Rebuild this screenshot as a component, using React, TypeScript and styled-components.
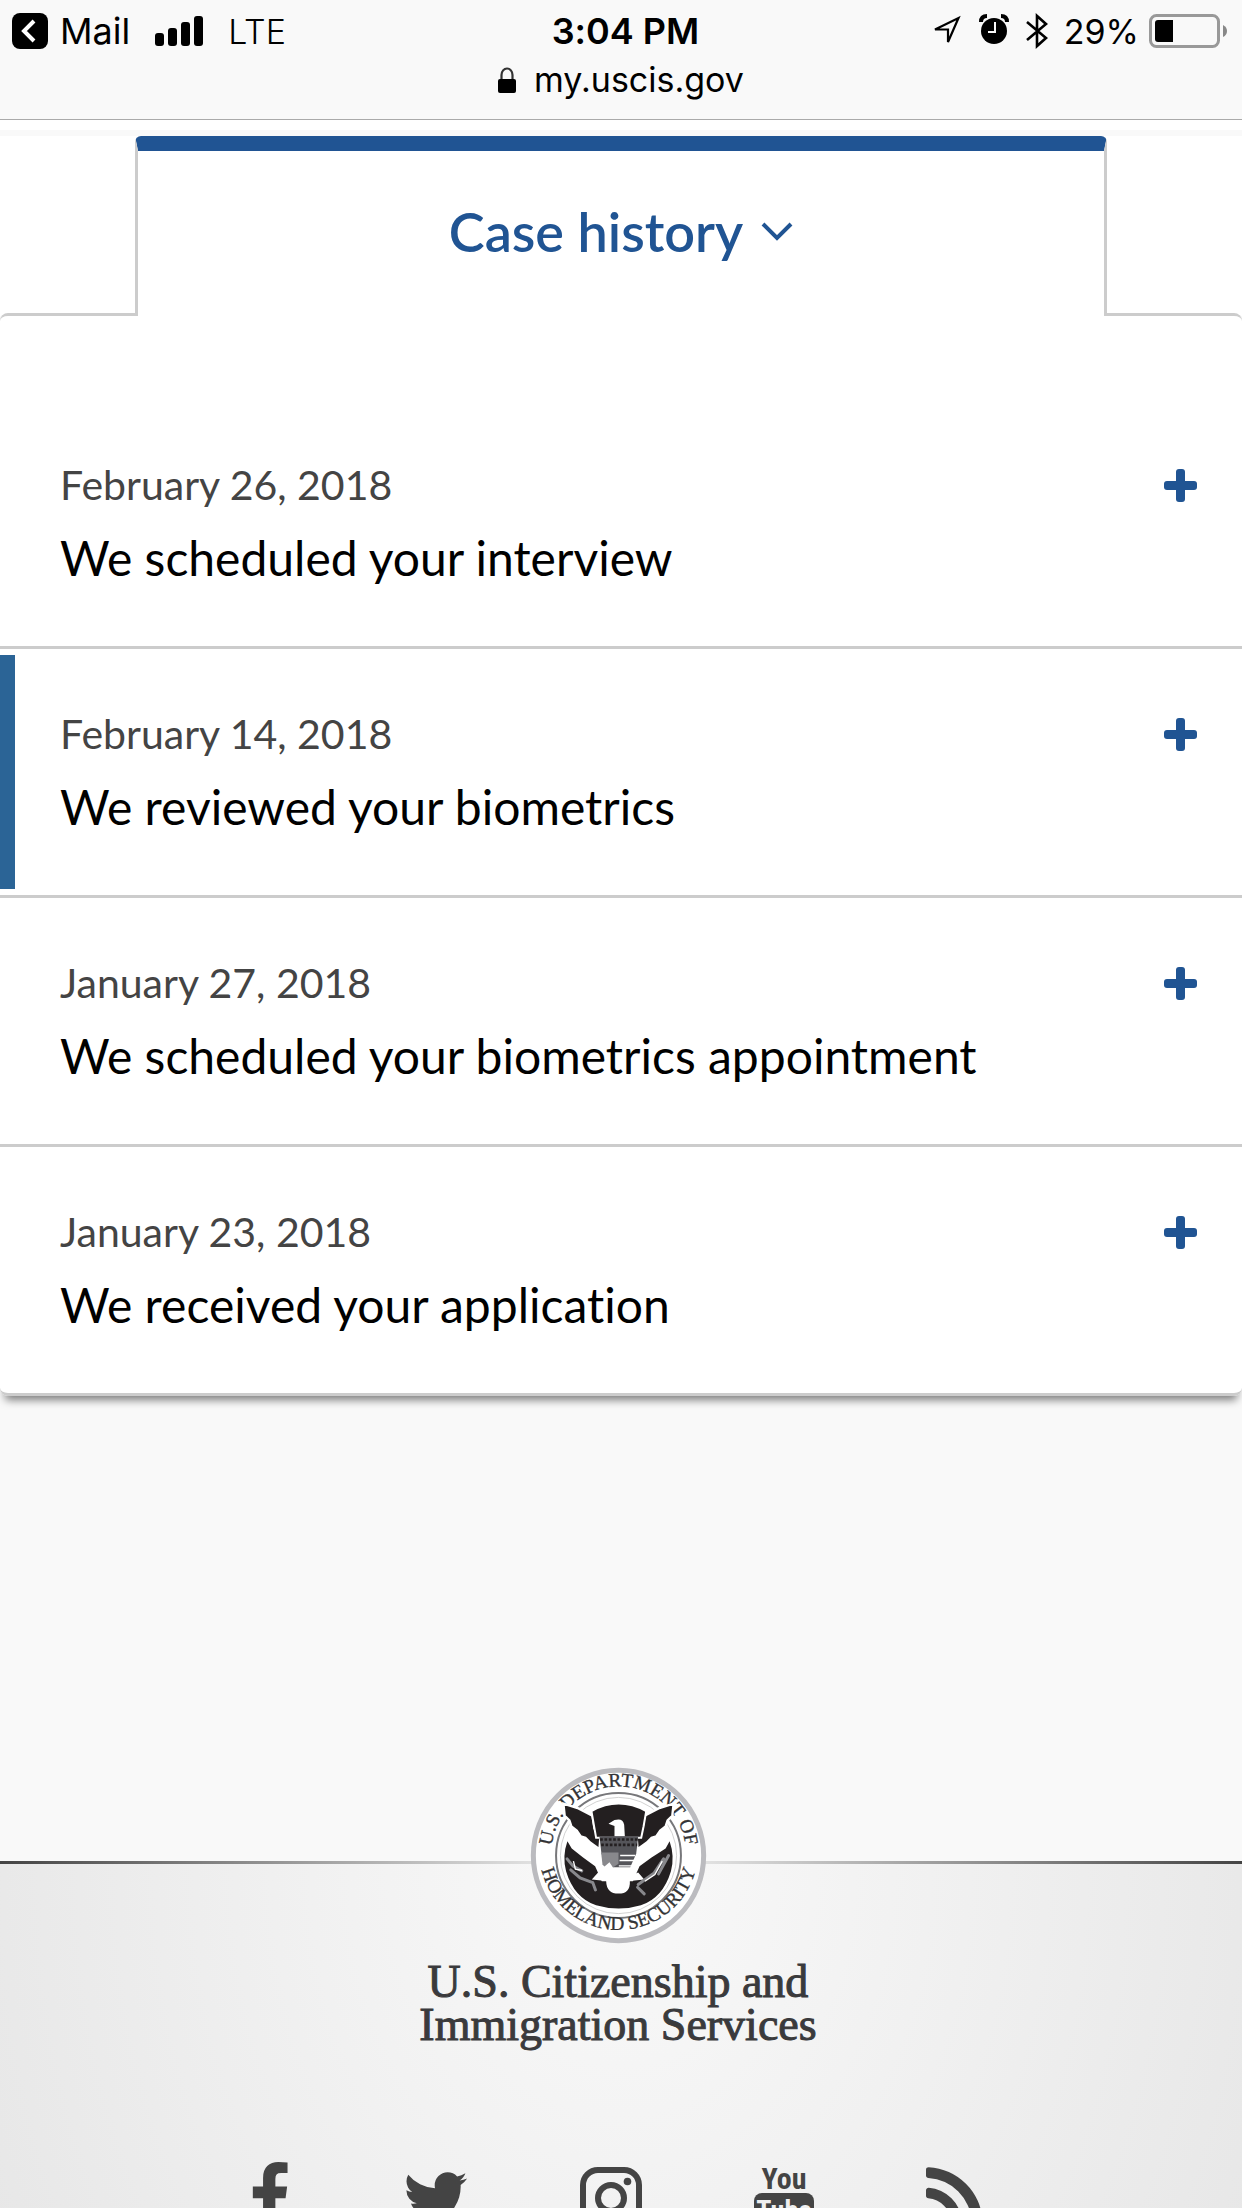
import React, { useState } from "react";
import styled, { createGlobalStyle } from "styled-components";

const blue = "#205493";
const ink = "#444444";
const line = "#cccccc";
const paper = "#f9f9f9";

const GlobalStyle = createGlobalStyle`
  *, *::before, *::after { box-sizing: border-box; }
  html, body, #root { height: 100%; }
  body {
    margin: 0;
    overflow: hidden;
    background: ${paper};
    color: #000;
    font-family: Lato, "Open Sans", sans-serif;
    font-variant-ligatures: none;
  }
  button { font: inherit; color: inherit; background: none; border: 0; padding: 0; text-align: left; cursor: pointer; }
  a { color: inherit; text-decoration: none; }
  svg { display: block; flex: none; }
`;

const Page = styled.div`
  min-height: 100%;
  display: flex;
  flex-direction: column;
`;

const BrowserBar = styled.header`
  flex: none;
  height: 120px;
  background: ${paper};
  border-bottom: 1px solid #aaa;
  font-family: Inter, "Liberation Sans", sans-serif;
  font-size: 34px;
`;

const StatusBar = styled.div`
  display: grid;
  grid-template-columns: 1fr auto 1fr;
  align-items: center;
  height: 62px;
  padding: 0 15px 0 12px;
`;

const StatusGroup = styled.div<{ $end?: boolean; $gap: number }>`
  display: flex;
  align-items: center;
  justify-content: ${(p) => (p.$end ? "flex-end" : "flex-start")};
  gap: ${(p) => p.$gap}px;
`;

const BackLink = styled.button`
  display: flex;
  align-items: center;
  gap: 12px;
  font-size: 36px;
`;

const Carrier = styled.span`
  font-weight: 300;
`;

const Clock = styled.time`
  padding-left: 12px;
  font-size: 36px;
  font-weight: 600;
`;

const BatteryGroup = styled.div`
  display: flex;
  align-items: center;
  gap: 10px;
`;

const Address = styled.div`
  display: flex;
  align-items: center;
  justify-content: center;
  gap: 18px;
  line-height: 36px;
`;

const History = styled.main`
  flex: none;
  margin-top: 10px;
  box-shadow: 0 -10px 0 #fff;
`;

const TabStrip = styled.div`
  border-top: 6px solid ${paper};
  background: #fff;
  padding: 0 135px;
`;

const Tab = styled.button`
  position: relative;
  z-index: 1;
  display: flex;
  align-items: center;
  justify-content: center;
  gap: 18px;
  width: 100%;
  height: 180px;
  margin-bottom: -3px;
  padding-bottom: 4px;
  background: #fff;
  border: 3px solid ${line};
  border-top: 15px solid ${blue};
  border-bottom: 0;
  border-radius: 6px 6px 0 0;
  color: ${blue};
  font-size: 54px;
  font-weight: 600;
`;

const Panel = styled.section`
  background: #fff;
  padding-top: 84px;
  border-top: 3px solid ${line};
  border-radius: 8px;
  box-shadow: 0 9px 9px -5px rgba(0, 0, 0, 0.5);
`;

const EventList = styled.ol`
  list-style: none;
  margin: 0;
  padding: 0;
`;

const EventItem = styled.li<{ $active?: boolean }>`
  border-bottom: 3px solid ${line};
  padding: 6px 0;
  &:last-child { border-radius: 0 0 8px 8px; }
  > button { border-left: 15px solid ${(p) => (p.$active ? "#2b6496" : "transparent")}; }
`;

const EventButton = styled.button`
  display: flex;
  align-items: flex-start;
  justify-content: space-between;
  width: 100%;
  padding: 42px 45px 46px 45px;
`;

const EventText = styled.span`
  display: flex;
  flex-direction: column;
  line-height: 73px;
`;

const EventDate = styled.time`
  color: ${ink};
  font-size: 41px;
`;

const EventTitle = styled.span`
  font-size: 48px;
`;

const PlusIcon = styled.svg`
  width: 33px;
  height: 33px;
  margin-top: 21px;
  fill: ${blue};
`;

const Footer = styled.footer`
  flex: 1 0 auto;
  display: flex;
  flex-direction: column;
  align-items: center;
  margin-top: 465px;
  padding-right: 6px;
  border-top: 3px solid;
  border-image: linear-gradient(90deg, #444 0%, #e4e4e4 44%, #e4e4e4 56%, #444 100%) 1;
  background: radial-gradient(ellipse 56% 900px at 50% 0, #f9f9f9 0%, #e7e7e7 100%);
`;

const Seal = styled.svg`
  width: 177px;
  height: 177px;
  margin-top: -97px;
`;

const Agency = styled.p`
  margin: 16px 0 0;
  color: #3a3a3c;
  font: 46px/43px "Liberation Serif", serif;
  -webkit-text-stroke: 1px #3a3a3c;
  text-align: center;
`;

const SocialLinks = styled.nav`
  display: flex;
  gap: 111px;
  margin-top: 116px;
  padding-right: 4px;
  height: 72px;
  color: ${ink};
  fill: currentColor;
`;

const events = [
  { date: "February 26, 2018", iso: "2018-02-26", title: "We scheduled your interview" },
  { date: "February 14, 2018", iso: "2018-02-14", title: "We reviewed your biometrics", active: true },
  { date: "January 27, 2018", iso: "2018-01-27", title: "We scheduled your biometrics appointment" },
  { date: "January 23, 2018", iso: "2018-01-23", title: "We received your application" },
];

function StatusIcons() {
  return (
    <StatusGroup $end $gap={16}>
      <svg width="117" height="36" viewBox="0 0 117 36" aria-hidden="true">
        <path d="M4 16.500L27.500 5L17 29V16.500Z" fill="none" stroke="#000" strokeWidth="2.200" />
        <circle cx="63" cy="18" r="13" />
        <path d="M50 9q0-6 6-6M76 9q0-6-6-6" fill="none" stroke="#000" strokeWidth="4" />
        <path d="M64 9v10h-7" fill="none" stroke={paper} strokeWidth="2" />
        <path d="M96 9l19 16-9 8V3l9 8-19 16" fill="none" stroke="#000" strokeWidth="2.600" />
      </svg>
      <BatteryGroup>
        <span>29%</span>
        <svg width="78" height="34" viewBox="0 0 78 34" aria-hidden="true">
          <rect x="1.500" y="1.500" width="68" height="31" rx="6" fill="none" stroke="#999" strokeWidth="3" />
          <path d="M9 6h15v22H9q-3 0-3-3V9q0-3 3-3Z" />
          <path d="M74 11q4 2 4 6t-4 6Z" fill="#888" />
        </svg>
      </BatteryGroup>
    </StatusGroup>
  );
}

function DhsSeal() {
  return (
    <Seal viewBox="90 80 530 530" role="img" aria-label="U.S. Department of Homeland Security seal">
      <defs>
        <path id="seal-top" d="M156 375a202 202 0 1 1 398 0" />
        <path id="seal-bottom" d="M117 330a238 238 0 0 0 476 0" />
      </defs>
      <circle cx="355" cy="345" r="255" fill="#fff" stroke="#bbbbbf" strokeWidth="15" />
      <circle cx="355" cy="345" r="187" fill="#fff" stroke="#77777a" strokeWidth="6" />
      <circle cx="355" cy="345" r="174" fill="none" stroke="#bbb" strokeWidth="2" />
      <g fill="#333335" stroke="#333335" strokeWidth="1" fontFamily="'Liberation Serif', serif" fontSize="58" textAnchor="middle">
        <text><textPath href="#seal-top" startOffset="50%">U.S. DEPARTMENT OF</textPath></text>
        <text><textPath href="#seal-bottom" startOffset="50%">HOMELAND SECURITY</textPath></text>
      </g>
      <path fill="#231f20" d="M202 302q-16 45-4 90 24 80 90 102 68 20 134 0 66-22 90-102 12-45-4-90l-12 22-42 27-36 26-20 45H305l-20-45-36-26-34-27Z" />
      <path fill="#231f20" stroke="#fff" strokeWidth="7" d="M190 190l45 14 42 22 6 38 18 22-3 40-28-20-14-14-14-4-12-18-16-12-6-18-14-14ZM520 190l-45 14-42 22-6 38-18 22 3 40 28-20 14-14 14-4 12-18 16-12 6-18 14-14Z" />
      <path fill="#231f20" stroke="#fff" strokeWidth="6" d="M274 212q81-45 164 0l-8 46-7 34H288Z" />
      <path fill="#fff" d="M325 250l18-11q25-8 29 14l2 34h-31v-30Z" />
      <path fill="#55555a" d="M298 288h116l-6 52-18 40h-68l-18-40Z" />
      <path fill="none" stroke="#231f20" strokeWidth="8" strokeDasharray="8 5" d="M300 297h112M303 313h108" />
      <path fill="#88888c" d="M303 336h52v34l-30 20-18-18Z" />
      <path fill="none" stroke="#fff" strokeWidth="4" d="M360 345h45M358 360h50M356 376h50M354 391h48" />
      <path fill="#fff" d="M275 417l25-28 28-24 24 36 34 6 28-11 18 21-43 4q2 38-34 38t-37-38Z" />
      <path fill="none" stroke="#88888c" strokeWidth="9" strokeLinecap="round" d="M201 355l18 22 26 14M212 388l28 24 38 14 8 22M505 345l-30 55M490 355l-28 42-48 35M432 460l-20-20" />
      <path fill="none" stroke="#fff" strokeWidth="4" d="M220 362l6 24 20 4M486 362l-22 40-30 20" />
    </Seal>
  );
}

export default function App() {
  const [open, setOpen] = useState<number | null>(null);

  return (
    <>
      <GlobalStyle />
      <Page>
        <BrowserBar>
          <StatusBar>
            <StatusGroup $gap={25}>
              <BackLink type="button">
                <svg width="36" height="36" viewBox="0 0 36 36" aria-hidden="true">
                  <rect width="36" height="36" rx="8" />
                  <path d="M22 8L12 18l10 10" fill="none" stroke="#fff" strokeWidth="4" />
                </svg>
                Mail
              </BackLink>
              <svg width="48" height="30" viewBox="0 0 48 30" aria-hidden="true">
                <rect y="17" width="9" height="13" rx="3" />
                <rect x="13" y="12" width="9" height="18" rx="3" />
                <rect x="26" y="6" width="9" height="24" rx="3" />
                <rect x="39" width="9" height="30" rx="3" />
              </svg>
              <Carrier>LTE</Carrier>
            </StatusGroup>
            <Clock>3:04 PM</Clock>
            <StatusIcons />
          </StatusBar>
          <Address>
            <svg width="18" height="26" viewBox="0 0 18 26" aria-hidden="true">
              <path d="M3.500 13V8a5.500 6.500 0 0 1 11 0v5" fill="none" stroke="#333" strokeWidth="2.200" />
              <rect y="12" width="18" height="14" rx="2" />
            </svg>
            <span>my.uscis.gov</span>
          </Address>
        </BrowserBar>

        <History>
          <TabStrip>
            <Tab type="button">
              Case history
              <svg width="32" height="20" viewBox="0 0 32 20" aria-hidden="true">
                <path d="M2 2l14 14L30 2" fill="none" stroke={blue} strokeWidth="4" />
              </svg>
            </Tab>
          </TabStrip>
          <Panel>
            <EventList>
              {events.map((e, i) => (
                <EventItem key={e.iso} $active={e.active}>
                  <EventButton
                    type="button"
                    aria-expanded={open === i}
                    onClick={() => setOpen(open === i ? null : i)}
                  >
                    <EventText>
                      <EventDate dateTime={e.iso}>{e.date}</EventDate>
                      <EventTitle>{e.title}</EventTitle>
                    </EventText>
                    <PlusIcon viewBox="0 0 33 33" aria-hidden="true">
                      <rect x="12" width="9" height="33" rx="3" />
                      <rect y="12" width="33" height="9" rx="3" />
                    </PlusIcon>
                  </EventButton>
                </EventItem>
              ))}
            </EventList>
          </Panel>
        </History>

        <Footer>
          <DhsSeal />
          <Agency>
            U.S. Citizenship and
            <br />
            Immigration Services
          </Agency>
          <SocialLinks aria-label="Social media">
            <a href="#facebook" aria-label="Facebook">
              <svg width="42" height="72" viewBox="384 0 1045 1792">
                <path d="M1343 12v264h-157q-86 0-116 36t-30 108v189h293l-39 296h-254v759h-306v-759h-255v-296h255v-218q0-186 104-288.500t277-102.500q147 0 228 12z" />
              </svg>
            </a>
            <a href="#twitter" aria-label="Twitter">
              <svg width="67" height="72" viewBox="62 0 1668 1792">
                <path d="M1684 408q-67 98-162 167 1 14 1 42 0 130-38 259.500t-115.500 248.500-184.500 210.500-258 146-323 54.500q-271 0-496-145 35 4 78 4 225 0 401-138-105-2-188-64.500t-114-159.500q33 5 61 5 43 0 85-11-112-23-185.500-111.500t-73.500-205.500v-4q68 38 146 41-66-44-105-115t-39-154q0-88 44-163 121 149 294.500 238.500t371.500 99.500q-8-38-8-74 0-134 94.500-228.500t228.500-94.500q140 0 236 102 109-21 205-78-37 115-142 178 93-10 186-50z" />
              </svg>
            </a>
            <a href="#instagram" aria-label="Instagram">
              <svg width="62" height="72" viewBox="0 0 62 72">
                <rect x="3" y="8" width="56" height="56" rx="15" fill="none" stroke="currentColor" strokeWidth="6" />
                <circle cx="31" cy="36" r="13" fill="none" stroke="currentColor" strokeWidth="6" />
                <circle cx="47.500" cy="19.500" r="3.800" />
              </svg>
            </a>
            <a href="#youtube" aria-label="YouTube">
              <svg width="62" height="72" viewBox="0 0 62 72" fontFamily="'Liberation Sans Narrow', 'Roboto Condensed', 'Open Sans Condensed', Roboto, sans-serif" fontWeight="700" textAnchor="middle">
                <text x="31" y="27" fontSize="30">You</text>
                <rect x="1" y="31" width="60" height="41" rx="8" />
                <text x="31" y="58" fontSize="28" fill="#efefef">Tube</text>
              </svg>
            </a>
            <a href="#rss" aria-label="RSS">
              <svg width="57" height="72" viewBox="192 0 1419 1792">
                <path d="M576 1344q0 80-56 136t-136 56-136-56-56-136 56-136 136-56 136 56 56 136zm512 123q2 28-17 48-18 21-47 21h-135q-25 0-43-16.500t-20-41.500q-22-229-184.500-391.500t-391.500-184.500q-25-2-41.500-20t-16.500-43v-135q0-29 21-47 17-17 43-17h5q160 13 306 80.500t259 181.500q114 113 181.500 259t80.500 306zm512 2q2 27-18 47-18 20-46 20h-143q-26 0-44.500-17.500t-19.500-42.500q-12-215-101-408.500t-231.500-336-336-231.500-408.500-102q-25-1-42.500-19.500t-17.500-43.500v-143q0-28 20-46 18-18 44-18h3q262 13 501.500 120t425.500 294q187 186 294 425.500t120 501.500z" />
              </svg>
            </a>
          </SocialLinks>
        </Footer>
      </Page>
    </>
  );
}
